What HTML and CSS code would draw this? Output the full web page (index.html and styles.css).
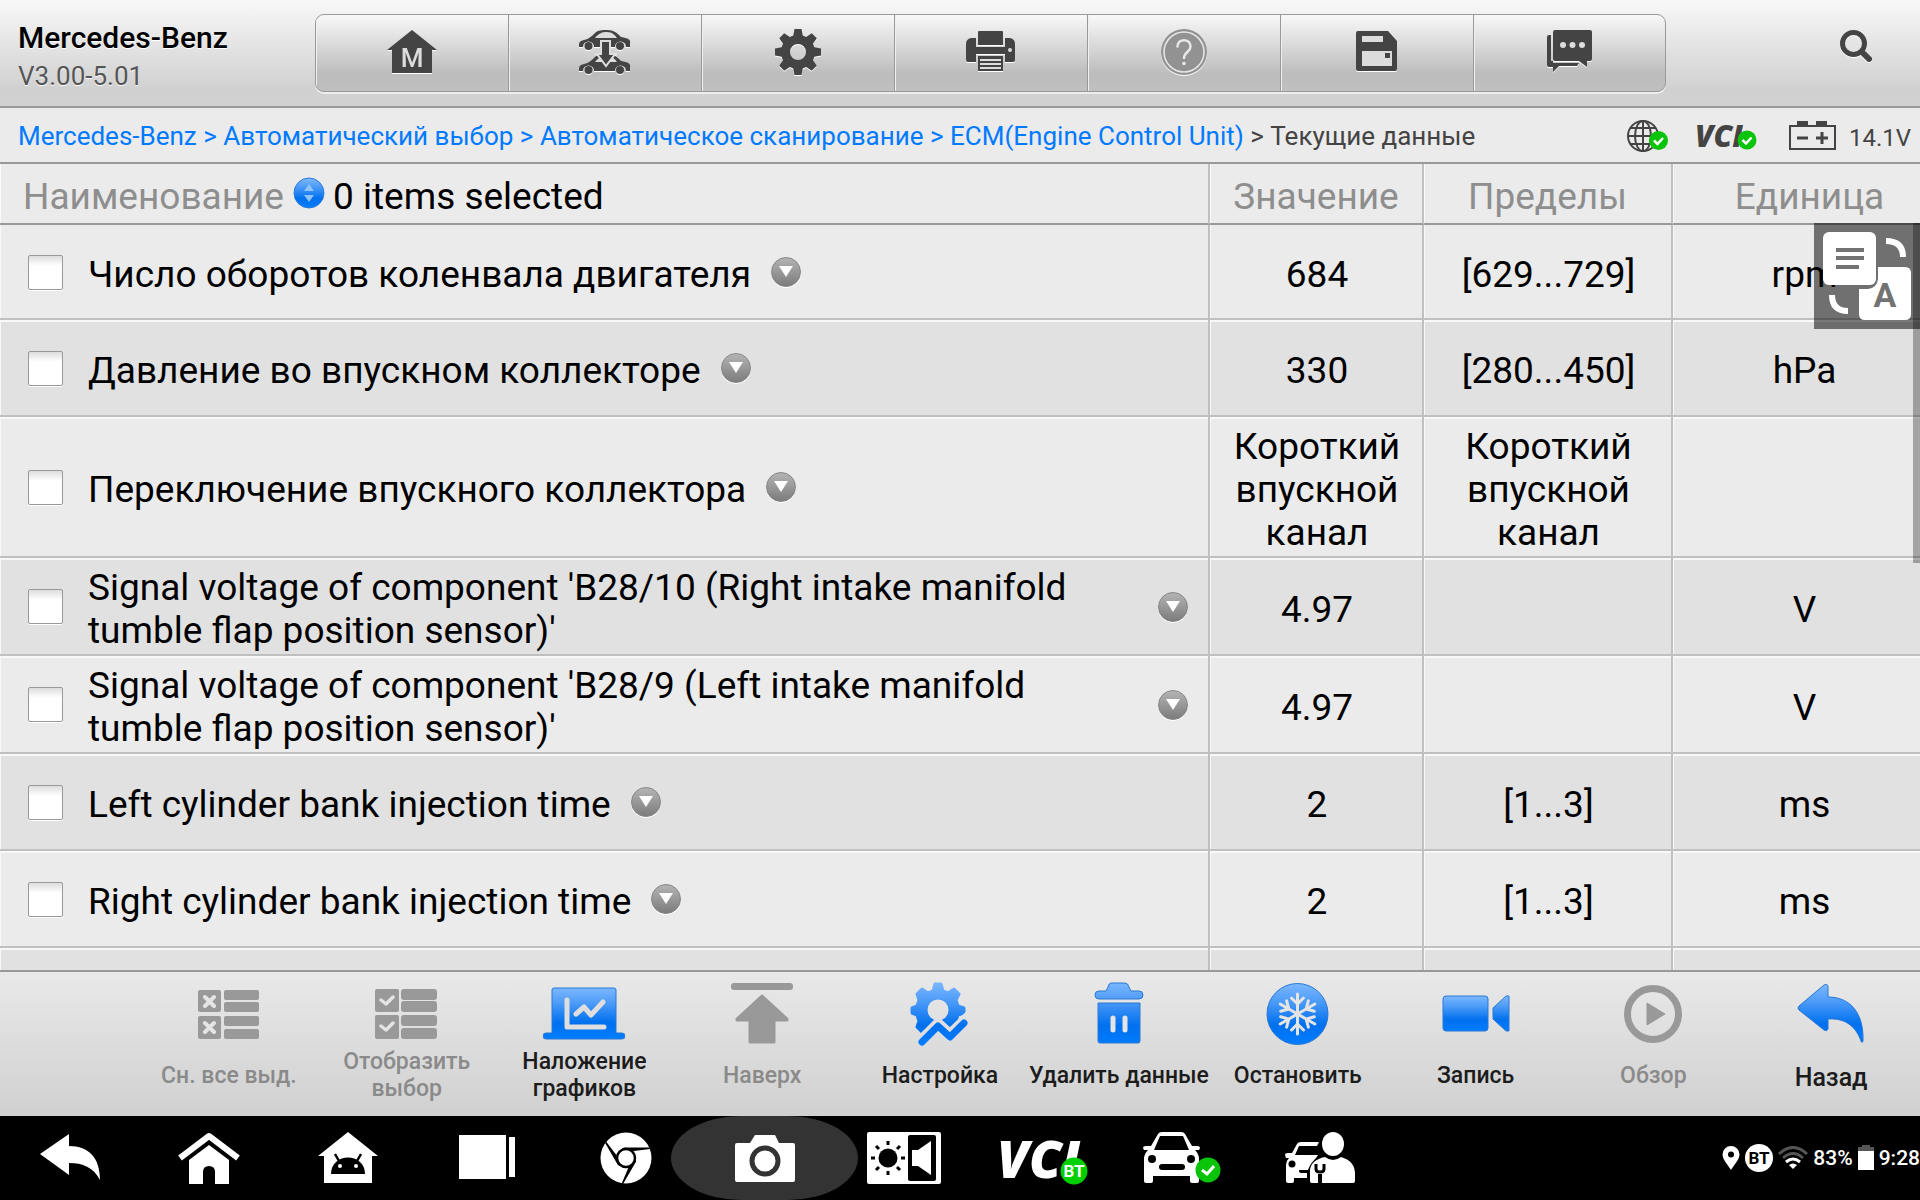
FILE: index.html
```html
<!DOCTYPE html>
<html lang="ru">
<head>
    <meta charset="UTF-8">
    <meta name="viewport" content="width=device-width, initial-scale=1.0">
    <title>Mercedes-Benz - Текущие данные</title>
    <link rel="stylesheet" href="styles.css">
</head>
<body>
    <!-- shared gradient for the blue icons -->
    <svg class="defs" width="0" height="0">
        <defs>
            <linearGradient id="blue" x1="0" y1="0" x2="0" y2="1">
                <stop offset="0" stop-color="#7db8ff"/>
                <stop offset="0.3" stop-color="#4c9bf8"/>
                <stop offset="0.68" stop-color="#0070ee"/>
                <stop offset="1" stop-color="#007dff"/>
            </linearGradient>
            <linearGradient id="blueTall" gradientUnits="userSpaceOnUse" x1="0" y1="0" x2="0" y2="64">
                <stop offset="0" stop-color="#7db8ff"/>
                <stop offset="0.3" stop-color="#4c9bf8"/>
                <stop offset="0.68" stop-color="#0070ee"/>
                <stop offset="1" stop-color="#007dff"/>
            </linearGradient>
        </defs>
    </svg>

    <header class="topbar">
        <div class="vehicle">
            <h1>Mercedes-Benz</h1>
            <p>V3.00-5.01</p>
        </div>
        <div class="tools">
            <button type="button" aria-label="Главная">
                <svg width="50" height="44" viewBox="0 0 50 44">
                    <path fill="#444" d="M25 0L50 20H45V43H5V20H0Z"/>
                    <text class="home-m" x="25" y="37" text-anchor="middle">M</text>
                </svg>
            </button>
            <button type="button" aria-label="Смена автомобиля">
                <svg width="52" height="45" viewBox="0 0 52 45">
                    <g id="car" fill="#444">
                        <path d="M0 16C0 12 1 11 5 10C10 9 13 6 16 3C19 0 23 0 28 0C35 0 38 3 42 7C49 8 52 10 51 13V17H47A5.500 5.500 0 0 0 36 17H15A5.500 5.500 0 0 0 4 17H0Z"/>
                        <circle cx="9.500" cy="16" r="4"/>
                        <circle cx="41" cy="16" r="4"/>
                        <path fill="#ddd" d="M16 8C20 3 23 2 28 2C33 2 36 5 38 8Z"/>
                    </g>
                    <use href="#car" y="24"/>
                    <path fill="#444" stroke="#ddd" stroke-width="2" d="M22 11H31V24H36L27 36L18 24H22Z"/>
                </svg>
            </button>
            <button type="button" aria-label="Настройки">
                <svg width="46" height="46" viewBox="-23 -23 46 46">
                    <circle r="12.500" fill="none" stroke="#444" stroke-width="9"/>
                    <g fill="#444">
                        <path id="tooth" d="M-5 -15L-3.500 -23H3.500L5 -15Z"/>
                        <use href="#tooth" transform="rotate(45)"/>
                        <use href="#tooth" transform="rotate(90)"/>
                        <use href="#tooth" transform="rotate(135)"/>
                        <use href="#tooth" transform="rotate(180)"/>
                        <use href="#tooth" transform="rotate(225)"/>
                        <use href="#tooth" transform="rotate(270)"/>
                        <use href="#tooth" transform="rotate(315)"/>
                    </g>
                </svg>
            </button>
            <button type="button" aria-label="Печать">
                <svg width="50" height="42" viewBox="0 0 50 42">
                    <path fill="#444" d="M12 1Q12 0 13 0H36Q37 0 37 1V14H12ZM5 7H10V16H39V7H44Q49 8 49 13V29Q49 31 47 31H39V23H10V31H2Q0 31 0 29V13Q0 8 5 7ZM12 25H37V40H12Z"/>
                    <path stroke="#ddd" stroke-width="2" d="M14 29H35M14 33H35M14 37H35"/>
                    <circle cx="44" cy="19" r="2" fill="#ddd"/>
                </svg>
            </button>
            <button type="button" aria-label="Справка" disabled>
                <svg width="48" height="48" viewBox="0 0 48 48">
                    <circle cx="24" cy="24" r="23" fill="#929292"/>
                    <circle cx="24" cy="24" r="20" fill="none" stroke="#e8e8e8" stroke-width="1.500"/>
                    <path fill="none" stroke="#e8e8e8" stroke-width="2.500" stroke-linecap="round" d="M17.500 18.500C17.500 10 30.500 10 30.500 18.500C30.500 24 24 24 24 30"/>
                    <circle cx="24" cy="35.500" r="1.800" fill="#e8e8e8"/>
                </svg>
            </button>
            <button type="button" aria-label="Сохранить">
                <svg width="42" height="42" viewBox="0 0 42 42">
                    <path fill="#444" d="M2 0H32L41 10V38Q41 40 39 40H2Q0 40 0 38V2Q0 0 2 0Z"/>
                    <path fill="#dcdcdc" d="M6 5H27V11H6ZM6 20H36V35H6Z"/>
                    <path fill="#444" d="M29 22H34V27H29Z"/>
                </svg>
            </button>
            <button type="button" aria-label="Сообщения">
                <svg width="46" height="44" viewBox="0 0 46 44">
                    <path fill="#444" d="M2 5H4V31H6V33H32L30 36H12L6 42V37H2Q0 37 0 35V7Q0 5 2 5Z"/>
                    <path fill="#444" d="M8 0H43Q45 0 45 2V29Q45 31 43 31H40V37L32 31H8Q6 31 6 29V2Q6 0 8 0Z"/>
                    <g fill="#ddd"><circle cx="16" cy="15" r="3"/><circle cx="25.500" cy="15" r="3"/><circle cx="35" cy="15" r="3"/></g>
                </svg>
            </button>
        </div>
        <button type="button" class="search" aria-label="Поиск">
            <svg width="34" height="34" viewBox="0 0 34 34">
                <circle cx="13.500" cy="13.500" r="11" fill="none" stroke="#444" stroke-width="5"/>
                <path stroke="#444" stroke-width="6" stroke-linecap="round" d="M22 22L29 29"/>
            </svg>
        </button>
    </header>

    <div class="pathbar">
        <nav class="crumbs">
            <a href="#">Mercedes-Benz</a> &gt; <a href="#">Автоматический выбор</a> &gt; <a href="#">Автоматическое сканирование</a> &gt; <a href="#">ECM(Engine Control Unit)</a> <span class="current">&gt; Текущие данные</span>
        </nav>
        <div class="status">
            <svg width="42" height="34" viewBox="0 0 42 34">
                <g fill="none" stroke="#444" stroke-width="2">
                    <circle cx="16" cy="17" r="15"/>
                    <ellipse cx="16" cy="17" rx="8" ry="15"/>
                    <path d="M16 2V32M1 17H31M4 9H28M4 25H28"/>
                </g>
                <circle cx="31.500" cy="21.500" r="9.500" fill="#0ac40a"/>
                <path fill="none" stroke="#fff" stroke-width="2.500" d="M27 21.500L30.500 25L36 19"/>
            </svg>
            <span class="vci">VCI
                <svg class="badge" width="20" height="20" viewBox="0 0 20 20">
                    <circle cx="10" cy="10" r="9.500" fill="#0ac40a"/>
                    <path fill="none" stroke="#fff" stroke-width="2.500" d="M5.500 10L9 13.500L14.500 7.500"/>
                </svg>
            </span>
            <svg width="48" height="30" viewBox="0 0 48 30">
                <path fill="#444" d="M8 0H19V5H8ZM27 0H38V5H27Z"/>
                <rect x="1" y="5" width="45" height="23" fill="none" stroke="#444" stroke-width="2"/>
                <path stroke="#444" stroke-width="3" d="M8 17H19M27 17H39M33 11V23"/>
            </svg>
            <span class="volts">14.1V</span>
        </div>
    </div>

    <main class="data">
        <table>
            <colgroup>
                <col>
                <col class="col-value">
                <col class="col-range">
                <col class="col-unit">
            </colgroup>
            <thead>
                <tr>
                    <th>
                        <div class="name-head">
                            <span>Наименование</span>
                            <button type="button" class="sort" aria-label="Сортировка">
                                <svg width="32" height="32" viewBox="0 0 32 32">
                                    <circle cx="16" cy="16" r="15" fill="url(#blue)" stroke="#2b7ad8"/>
                                    <path fill="#8fc3ff" d="M16 7L21 14H11ZM16 25L21 18H11Z"/>
                                </svg>
                            </button>
                            <span class="count">0 items selected</span>
                        </div>
                    </th>
                    <th>Значение</th>
                    <th>Пределы</th>
                    <th>Единица</th>
                </tr>
            </thead>
            <tbody>
                <tr>
                    <td>
                        <div class="name">
                            <input type="checkbox" id="item1">
                            <label for="item1">Число оборотов коленвала двигателя</label>
                            <button type="button" class="more" aria-label="Подробнее"><svg width="14" height="12" viewBox="0 0 14 12"><path d="M0 0H14L7 11Z"/></svg></button>
                        </div>
                    </td>
                    <td>684</td>
                    <td>[629...729]</td>
                    <td>rpm</td>
                </tr>
                <tr>
                    <td>
                        <div class="name">
                            <input type="checkbox" id="item2">
                            <label for="item2">Давление во впускном коллекторе</label>
                            <button type="button" class="more" aria-label="Подробнее"><svg width="14" height="12" viewBox="0 0 14 12"><path d="M0 0H14L7 11Z"/></svg></button>
                        </div>
                    </td>
                    <td>330</td>
                    <td>[280...450]</td>
                    <td>hPa</td>
                </tr>
                <tr>
                    <td>
                        <div class="name">
                            <input type="checkbox" id="item3">
                            <label for="item3">Переключение впускного коллектора</label>
                            <button type="button" class="more" aria-label="Подробнее"><svg width="14" height="12" viewBox="0 0 14 12"><path d="M0 0H14L7 11Z"/></svg></button>
                        </div>
                    </td>
                    <td>Короткий впускной канал</td>
                    <td>Короткий впускной канал</td>
                    <td></td>
                </tr>
                <tr>
                    <td>
                        <div class="name">
                            <input type="checkbox" id="item4">
                            <label for="item4">Signal voltage of component 'B28/10 (Right intake manifold tumble flap position sensor)'</label>
                            <button type="button" class="more" aria-label="Подробнее"><svg width="14" height="12" viewBox="0 0 14 12"><path d="M0 0H14L7 11Z"/></svg></button>
                        </div>
                    </td>
                    <td>4.97</td>
                    <td></td>
                    <td>V</td>
                </tr>
                <tr>
                    <td>
                        <div class="name">
                            <input type="checkbox" id="item5">
                            <label for="item5">Signal voltage of component 'B28/9 (Left intake manifold tumble flap position sensor)'</label>
                            <button type="button" class="more" aria-label="Подробнее"><svg width="14" height="12" viewBox="0 0 14 12"><path d="M0 0H14L7 11Z"/></svg></button>
                        </div>
                    </td>
                    <td>4.97</td>
                    <td></td>
                    <td>V</td>
                </tr>
                <tr>
                    <td>
                        <div class="name">
                            <input type="checkbox" id="item6">
                            <label for="item6">Left cylinder bank injection time</label>
                            <button type="button" class="more" aria-label="Подробнее"><svg width="14" height="12" viewBox="0 0 14 12"><path d="M0 0H14L7 11Z"/></svg></button>
                        </div>
                    </td>
                    <td>2</td>
                    <td>[1...3]</td>
                    <td>ms</td>
                </tr>
                <tr>
                    <td>
                        <div class="name">
                            <input type="checkbox" id="item7">
                            <label for="item7">Right cylinder bank injection time</label>
                            <button type="button" class="more" aria-label="Подробнее"><svg width="14" height="12" viewBox="0 0 14 12"><path d="M0 0H14L7 11Z"/></svg></button>
                        </div>
                    </td>
                    <td>2</td>
                    <td>[1...3]</td>
                    <td>ms</td>
                </tr>
                <tr>
                    <td></td>
                    <td></td>
                    <td></td>
                    <td></td>
                </tr>
            </tbody>
        </table>
    </main>

    <!-- floating translate button over the table -->
    <button type="button" class="translate" aria-label="Перевод">
        <svg width="106" height="106" viewBox="0 0 106 106">
            <path fill="#fff" d="M50 44H91Q97 44 97 50V91Q97 97 91 97H51Q45 97 45 91V66H54Q63 65 64 56V44Z"/>
            <rect x="9" y="9" width="53" height="53" rx="6" fill="#fff"/>
            <path stroke="#737373" stroke-width="4" d="M22 27H50M22 35H50M22 44H45"/>
            <path fill="none" stroke="#fff" stroke-width="6" d="M72 18Q89 18 89 34M18 72Q18 88 34 88"/>
            <text class="translate-a" x="71" y="84" text-anchor="middle">A</text>
        </svg>
    </button>
    <div class="scrollbar"></div>

    <footer class="actions">
        <button type="button" disabled>
            <svg width="62" height="64" viewBox="0 0 62 64">
                <g fill="#999">
                    <rect x="0" y="8" width="23" height="22" rx="2"/><rect x="26" y="8" width="35" height="10" rx="2"/><rect x="26" y="20" width="35" height="10" rx="2"/>
                    <rect x="0" y="34" width="23" height="23" rx="2"/><rect x="26" y="34" width="35" height="10" rx="2"/><rect x="26" y="47" width="35" height="10" rx="2"/>
                </g>
                <path stroke="#e4e4e4" stroke-width="4" stroke-linecap="round" d="M7 15L16 24M16 15L7 24M7 41L16 50M16 41L7 50"/>
            </svg>
            <span>Сн. все выд.</span>
        </button>
        <button type="button" disabled>
            <svg width="63" height="64" viewBox="0 0 63 64">
                <g fill="#999">
                    <rect x="0" y="7" width="24" height="23" rx="2"/><rect x="26" y="7" width="36" height="11" rx="3"/><rect x="26" y="19" width="36" height="11" rx="3"/>
                    <rect x="0" y="33" width="24" height="24" rx="2"/><rect x="26" y="33" width="36" height="11" rx="3"/><rect x="26" y="46" width="36" height="11" rx="3"/>
                </g>
                <path fill="none" stroke="#e4e4e4" stroke-width="3.500" stroke-linecap="round" stroke-linejoin="round" d="M6 18L11 22L18 15M6 44L11 48L18 41"/>
            </svg>
            <span>Отобразить выбор</span>
        </button>
        <button type="button">
            <svg width="82" height="64" viewBox="0 0 82 64">
                <path fill="url(#blue)" stroke="#2a78d4" stroke-width="1" d="M11 6H71Q73 6 73 8V51H79Q82 51 82 54Q82 57 79 57H3Q0 57 0 54Q0 51 3 51H9V8Q9 6 11 6Z"/>
                <path fill="none" stroke="#dedede" stroke-width="5" stroke-linecap="round" stroke-linejoin="round" d="M24 18V45H61"/>
                <path fill="none" stroke="#dedede" stroke-width="5" stroke-linecap="round" stroke-linejoin="round" d="M33 32L41 25L48 33L60 20"/>
            </svg>
            <span>Наложение графиков</span>
        </button>
        <button type="button" disabled>
            <svg width="62" height="64" viewBox="0 0 62 64">
                <rect x="0" y="1" width="62" height="7" rx="3" fill="#999"/>
                <path fill="#999" stroke="#999" stroke-width="3" stroke-linejoin="round" d="M31 14L56 37V38H43V60H19V38H6V37Z"/>
            </svg>
            <span>Наверх</span>
        </button>
        <button type="button">
            <svg width="60" height="64" viewBox="0 0 60 64">
                <defs>
                    <mask id="gearCut">
                        <path fill="#fff" d="M0 0H60V64H0Z"/>
                        <circle cx="28" cy="28" r="10.500"/>
                        <path stroke="#000" stroke-width="13" stroke-linejoin="round" d="M11 60L28 43L40 54L62 33V70H0Z"/>
                    </mask>
                </defs>
                <g fill="url(#blueTall)" mask="url(#gearCut)">
                    <path stroke="url(#blueTall)" stroke-width="3" stroke-linejoin="round" d="M25 2H31L33 9L38 11L44 7L49 12L46 18L48 24L54 26V31L48 33L46 39L49 45L44 50L38 46L33 49L31 56H25L23 49L18 46L12 50L7 45L9 39L7 33L2 31V26L7 24L9 18L7 12L12 7L18 11L23 9Z"/>
                </g>
                <path fill="none" stroke="url(#blueTall)" stroke-width="7" stroke-linecap="round" stroke-linejoin="round" d="M12 60L28 44L40 55L54 41"/>
            </svg>
            <span>Настройка</span>
        </button>
        <button type="button">
            <svg width="50" height="64" viewBox="0 0 50 64">
                <path fill="url(#blueTall)" stroke="#2a78d4" stroke-width="1" d="M17 1H31Q34 1 35 5L37 9H45Q49 9 49 13Q49 17 45 17H5Q1 17 1 13Q1 9 5 9H12L14 5Q15 1 17 1ZM4 21H46V59Q46 61 44 61H6Q4 61 4 59Z"/>
                <path stroke="#e4e4e4" stroke-width="5" stroke-linecap="round" d="M19 36V48M31 36V48"/>
            </svg>
            <span>Удалить данные</span>
        </button>
        <button type="button">
            <svg width="63" height="64" viewBox="0 0 63 64">
                <circle cx="31.500" cy="32" r="30.500" fill="url(#blue)" stroke="#2a78d4"/>
                <g fill="none" stroke="#e4e4e4" stroke-width="3" stroke-linecap="round">
                    <path id="flake" d="M31.500 32V12M25.500 16L31.500 22L37.500 16"/>
                    <use href="#flake" transform="rotate(60 31.500 32)"/>
                    <use href="#flake" transform="rotate(120 31.500 32)"/>
                    <use href="#flake" transform="rotate(180 31.500 32)"/>
                    <use href="#flake" transform="rotate(240 31.500 32)"/>
                    <use href="#flake" transform="rotate(300 31.500 32)"/>
                </g>
            </svg>
            <span>Остановить</span>
        </button>
        <button type="button">
            <svg width="68" height="64" viewBox="0 0 68 64">
                <path fill="url(#blue)" stroke="#2a78d4" stroke-width="1" d="M4 14H43Q46 14 46 17V46Q46 49 43 49H4Q1 49 1 46V17Q1 14 4 14ZM67 14V49H64L51 37V26L64 14Z"/>
            </svg>
            <span>Запись</span>
        </button>
        <button type="button" disabled>
            <svg width="60" height="64" viewBox="0 0 60 64">
                <circle cx="30" cy="32" r="25.500" fill="none" stroke="#999" stroke-width="7"/>
                <path fill="#999" stroke="#999" stroke-width="1" stroke-linejoin="round" d="M24 21L42 32L24 43Z"/>
            </svg>
            <span>Обзор</span>
        </button>
        <button type="button" class="back">
            <svg width="68" height="64" viewBox="0 0 68 64">
                <path fill="url(#blue)" stroke="#2a78d4" stroke-width="1" stroke-linejoin="round" d="M27 3Q30 1 31 4V15C54 15 67 32 66 59C65 61 65 61 64 59C58 42 46 36 31 37V47Q30 50 27 48L2 28Q0 26 2 24Z"/>
            </svg>
            <span>Назад</span>
        </button>
    </footer>

    <nav class="sysbar">
        <div class="apps">
            <button type="button" aria-label="Назад">
                <svg width="62" height="52" viewBox="0 0 62 52"><path fill="#fff" d="M30 2V14C50 14 61 26 61 48C54 35 44 31 30 31V43L1 22Z"/></svg>
            </button>
            <button type="button" aria-label="Домой">
                <svg width="62" height="52" viewBox="0 0 62 52">
                    <path fill="none" stroke="#fff" stroke-width="6" stroke-linejoin="round" d="M2 26L31 4L60 26"/>
                    <path fill="#fff" d="M31 13L51 28V52H37V40Q37 34 31 34Q25 34 25 40V52H11V28Z"/>
                </svg>
            </button>
            <button type="button" aria-label="Android">
                <svg width="60" height="52" viewBox="0 0 60 52">
                    <path fill="#fff" d="M30 0L60 24H54V51H6V24H0Z"/>
                    <path d="M13 42C13 20 47 20 47 42Z"/>
                    <path stroke="#000" stroke-width="2.500" d="M17 22L21 29M43 22L39 29"/>
                    <circle cx="22" cy="34" r="2" fill="#fff"/><circle cx="38" cy="34" r="2" fill="#fff"/>
                </svg>
            </button>
            <button type="button" aria-label="Последние">
                <svg width="56" height="52" viewBox="0 0 56 52"><path fill="#fff" d="M0 3H47V47H0ZM50 5H56V45H50Z"/></svg>
            </button>
            <button type="button" aria-label="Chrome">
                <svg width="52" height="52" viewBox="-26 -26 52 52">
                    <circle r="25.500" fill="#fff"/>
                    <circle r="9" fill="none" stroke="#000" stroke-width="2.500"/>
                    <path id="blade" d="M-4 -9L-2 -10.500L23.500 -10.500L24 -9L8 -7Z"/>
                    <use href="#blade" transform="rotate(120)"/>
                    <use href="#blade" transform="rotate(240)"/>
                </svg>
            </button>
            <button type="button" class="shot" aria-label="Снимок экрана">
                <svg width="60" height="52" viewBox="0 0 60 52">
                    <path fill="#fff" d="M2 11H15L20 3H40L44 11H58Q60 11 60 13V48Q60 50 58 50H2Q0 50 0 48V13Q0 11 2 11Z"/>
                    <circle cx="30" cy="29" r="13" fill="#fff" stroke="#333" stroke-width="5"/>
                </svg>
            </button>
            <button type="button" aria-label="Яркость и звук">
                <svg width="74" height="52" viewBox="0 0 74 52">
                    <rect width="74" height="52" rx="2" fill="#fff"/>
                    <rect x="41" y="3" width="28" height="46" rx="2"/>
                    <path fill="#fff" d="M45 18H51L64 9V43L51 34H45Z"/>
                    <circle cx="21" cy="26" r="9.500"/>
                    <path stroke="#000" stroke-width="3" d="M21 9V13M21 39V43M4 26H8M34 26H38M9 14L12 17M30 35L33 38M9 38L12 35M30 17L33 14"/>
                </svg>
            </button>
            <button type="button" class="vci-app" aria-label="VCI">
                <span>VCI</span>
                <svg width="28" height="28" viewBox="0 0 28 28"><circle cx="14" cy="14" r="13.500" fill="#00cf00"/><text class="bt-badge" x="14" y="20" text-anchor="middle">BT</text></svg>
            </button>
            <button type="button" aria-label="Автомобиль">
                <svg width="78" height="52" viewBox="0 0 78 52">
                    <path fill="#fff" d="M15 2Q16 0 19 0H38Q41 0 42 2L49 14H54Q57 14 57 16L56 18H52Q56 22 56 27V49Q56 51 54 51H49Q47 51 47 49V44H10V49Q10 51 8 51H3Q1 51 1 49V27Q1 22 5 18H1L0 16Q0 14 3 14H8Z"/>
                    <path d="M17 4H40L46 18H11Z"/>
                    <circle cx="9" cy="27" r="4"/><circle cx="48" cy="27" r="4"/>
                    <rect x="16" y="32" width="26" height="6" rx="3"/>
                    <circle cx="65" cy="38" r="12.500" fill="#0ac40a"/>
                    <path fill="none" stroke="#fff" stroke-width="3" d="M59 38L64 42L71 34"/>
                </svg>
            </button>
            <button type="button" aria-label="Удалённая помощь">
                <svg width="72" height="52" viewBox="0 0 72 52">
                    <path fill="#fff" d="M34 10H16Q13 10 12 12L7 21H3Q0 21 0 23L1 26H4Q1 29 1 33V49Q1 51 3 51H7Q9 51 9 49V46H22V41H16Q14 41 14 38H23Q25 32 31 26L33 23H10L14 14H32Z"/>
                    <circle cx="7" cy="32" r="3.500"/>
                    <ellipse cx="48" cy="12" rx="11" ry="12" fill="#fff"/>
                    <path fill="#fff" d="M40 25Q48 31 56 25Q70 29 70 42V49Q70 51 68 51H27Q25 51 25 49V38Q26 28 40 25Z"/>
                    <path fill="none" stroke="#000" stroke-width="4" d="M35 51V42"/>
                    <path fill="none" stroke="#000" stroke-width="3" d="M31 32V37Q31 40 35 40Q39 40 39 37V32"/>
                </svg>
            </button>
        </div>
        <div class="tray">
            <svg width="18" height="26" viewBox="0 0 18 26"><path fill="#fff" fill-rule="evenodd" d="M9 1A8.500 8.500 0 0 1 17.500 9.500C17.500 15 11 21 9 25C7 21 0.500 15 0.500 9.500A8.500 8.500 0 0 1 9 1ZM9 6.500A3 3 0 1 0 9 12.500A3 3 0 1 0 9 6.500Z"/></svg>
            <svg width="28" height="28" viewBox="0 0 28 28"><circle cx="14" cy="14" r="14" fill="#fff"/><text class="bt-tray" x="14" y="20" text-anchor="middle">BT</text></svg>
            <svg width="30" height="24" viewBox="0 0 30 24">
                <g fill="none" stroke-width="3">
                    <path stroke="#555" d="M1 8Q15 -5 29 8"/>
                    <path stroke="#555" d="M5 12Q15 3 25 12"/>
                    <path stroke="#fff" d="M8 16Q15 10 22 16"/>
                </g>
                <path fill="#fff" d="M11 19Q15 16 19 19L15 23Z"/>
            </svg>
            <span>83%</span>
            <svg width="16" height="26" viewBox="0 0 16 26"><path fill="#555" d="M4 0H12V2H16V7H0V2H4Z"/><path fill="#fff" d="M0 6H16V25H0Z"/></svg>
            <span>9:28</span>
        </div>
    </nav>
</body>
</html>
```
FILE: styles.css
```css
* {
    box-sizing: border-box;
}
body {
    margin: 0;
    height: 100vh;
    display: flex;
    flex-direction: column;
    overflow: hidden;
    position: relative;
    font-family: Roboto, "Noto Sans", sans-serif;
    background: #ebebeb;
    color: #000;
}
button {
    margin: 0;
    padding: 0;
    border: none;
    background: none;
    font-family: inherit;
    color: inherit;
    cursor: pointer;
}
svg {
    display: block;
    flex: none;
}
.defs {
    position: absolute;
}

/* Top bar */
.topbar {
    height: 108px;
    flex: none;
    display: flex;
    align-items: center;
    padding-right: 46px;
    border-bottom: 2px solid #999;
    background: linear-gradient(#f8f8f8, #d0d0d0 85%, #d2d2d2);
}
.vehicle {
    width: 315px;
    padding: 8px 0 0 18px;
}
.vehicle h1 {
    margin: 0;
    font-size: 30px;
    line-height: 38px;
    font-weight: 500;
    text-shadow: 0 1px 0 #fff;
}
.vehicle p {
    margin: 0;
    font-size: 26px;
    line-height: 38px;
    color: #555;
    text-shadow: 0 1px 0 #fff;
}
.tools {
    display: flex;
    height: 78px;
    border: 1px solid #999;
    border-radius: 9px;
    overflow: hidden;
    background: linear-gradient(#f8f8f8, #bcbcbc 78%, #c0c0c0);
    box-shadow: 0 2px 0 #eee;
}
.tools button {
    width: 193px;
    display: flex;
    align-items: center;
    justify-content: center;
    padding-bottom: 2px;
    border-left: 1px solid #999;
    box-shadow: inset 1px 0 #f0f0f0;
}
.tools button:first-child {
    width: 192px;
    border-left: none;
}
.tools button:last-child {
    width: 192px;
}
.tools svg,
.search svg {
    filter: drop-shadow(0 1px 0 #fff);
}
.home-m {
    font-size: 26px;
    font-weight: 500;
    fill: #ddd;
}
.search {
    margin-left: auto;
    padding-bottom: 12px;
}

/* Breadcrumb and status */
.pathbar {
    height: 56px;
    flex: none;
    display: flex;
    align-items: center;
    justify-content: space-between;
    padding: 0 9px 0 18px;
    border-bottom: 2px solid #999;
}
.crumbs {
    padding-top: 2px;
    font-size: 26px;
    color: #007aff;
    white-space: nowrap;
}
.crumbs a {
    color: #007aff;
    text-decoration: none;
}
.crumbs .current {
    color: #444;
}
.status {
    display: flex;
    align-items: center;
    padding-top: 2px;
}
.vci {
    position: relative;
    width: 62px;
    margin: 0 32px 0 26px;
    font: italic 800 30px/30px "Open Sans", sans-serif;
    color: #444;
}
.badge {
    position: absolute;
    right: 0;
    top: 9px;
}
.volts {
    margin-left: 12px;
    padding-top: 4px;
    font-size: 24px;
    color: #444;
}

/* Data table */
.data {
    flex: 1;
    min-height: 0;
    overflow: hidden;
}
table {
    width: 100%;
    table-layout: fixed;
    border-collapse: separate;
    border-spacing: 0;
    font-size: 37px;
    line-height: 43px;
}
.col-value {
    width: 214px;
}
.col-range {
    width: 249px;
}
.col-unit {
    width: 247px;
}
th {
    height: 61px;
    padding: 5px 0 0;
    font-weight: 400;
    color: #8e8e8e;
    border-right: 2px solid #c0c0c0;
    border-bottom: 2px solid #999;
    box-shadow: inset 1px 0 #fafafa;
}
td {
    height: 97px;
    padding: 8px 20px 2px 22px;
    text-align: center;
    border-right: 2px solid #c0c0c0;
    border-bottom: 2px solid #c0c0c0;
    box-shadow: inset 1px 2px #f8f8f8;
}
tbody tr:first-child td {
    height: 95px;
    box-shadow: inset 1px 0 #f8f8f8;
}
tbody tr:nth-child(even) {
    background: #e1e1e1;
}
th:last-child,
td:last-child {
    border-right: none;
}
th:last-child {
    padding-left: 26px;
}
td:last-child {
    padding-left: 36px;
}
td:first-child {
    padding: 3px 20px 2px 28px;
}
.name-head {
    display: flex;
    align-items: center;
    padding-left: 23px;
}
.sort {
    margin: 0 8px 6px 9px;
}
.count {
    color: #000;
}
.name {
    display: flex;
    align-items: center;
    text-align: left;
}
.name input {
    appearance: none;
    flex: none;
    width: 35px;
    height: 35px;
    margin: 0 25px 0 0;
    border: 1px solid #999;
    border-radius: 2px;
    background: linear-gradient(#ddd, #fff 30%);
    box-shadow: 0 1px 0 #fff;
}
.name label {
    padding-top: 5px;
}
.more {
    flex: none;
    width: 30px;
    height: 30px;
    margin-left: 20px;
    display: flex;
    align-items: center;
    justify-content: center;
    border: 1px solid #848484;
    border-radius: 50%;
    background: linear-gradient(#b4b4b4, #7c7c7c);
    box-shadow: 0 1px 0 #fff;
}
.more svg {
    fill: #fff;
}
.translate {
    position: absolute;
    right: 0;
    top: 223px;
    background: rgba(0, 0, 0, 0.52);
}
.translate-a {
    font-size: 34px;
    font-weight: 700;
    fill: #737373;
}
.scrollbar {
    position: absolute;
    right: 0;
    top: 223px;
    width: 7px;
    height: 340px;
    background: rgba(0, 0, 0, 0.3);
}

/* Bottom actions */
.actions {
    height: 146px;
    flex: none;
    display: grid;
    grid-template-columns: repeat(10, 1fr);
    padding-left: 140px;
    border-top: 2px solid #999;
    background: linear-gradient(#e9e9e9, #d0d0d0);
}
.actions button {
    display: flex;
    flex-direction: column;
    align-items: center;
    padding-top: 10px;
    font-size: 23px;
    line-height: 27px;
    font-weight: 500;
    color: #1c1c1c;
}
.actions button:disabled {
    color: #8a8a8a;
}
.actions button span {
    height: 58px;
    display: flex;
    align-items: center;
    padding: 0 20px;
}
.actions button:nth-child(6) span {
    padding: 0;
    white-space: nowrap;
}
.actions .back {
    font-size: 25px;
    line-height: 31px;
}
.actions .back span {
    height: 62px;
}

/* System bar */
.sysbar {
    height: 84px;
    flex: none;
    display: flex;
    justify-content: space-between;
    background: #000;
    color: #fff;
}
.apps {
    display: flex;
}
.apps button {
    width: 139px;
    display: flex;
    align-items: center;
    justify-content: center;
}
.apps .shot {
    width: 187px;
    margin: 0 -24px;
    border-radius: 70px / 42px;
    background: #333;
}
.apps .vci-app span {
    font: italic 800 52px/52px "Open Sans", sans-serif;
}
.vci-app svg {
    margin: 26px 0 0 -20px;
}
.bt-badge {
    font-size: 17px;
    font-weight: 700;
    fill: #fff;
}
.bt-tray {
    font-size: 17px;
    font-weight: 700;
    fill: #000;
}
.tray {
    display: flex;
    align-items: center;
    gap: 5px;
    font-size: 21px;
    font-weight: 500;
}
```
